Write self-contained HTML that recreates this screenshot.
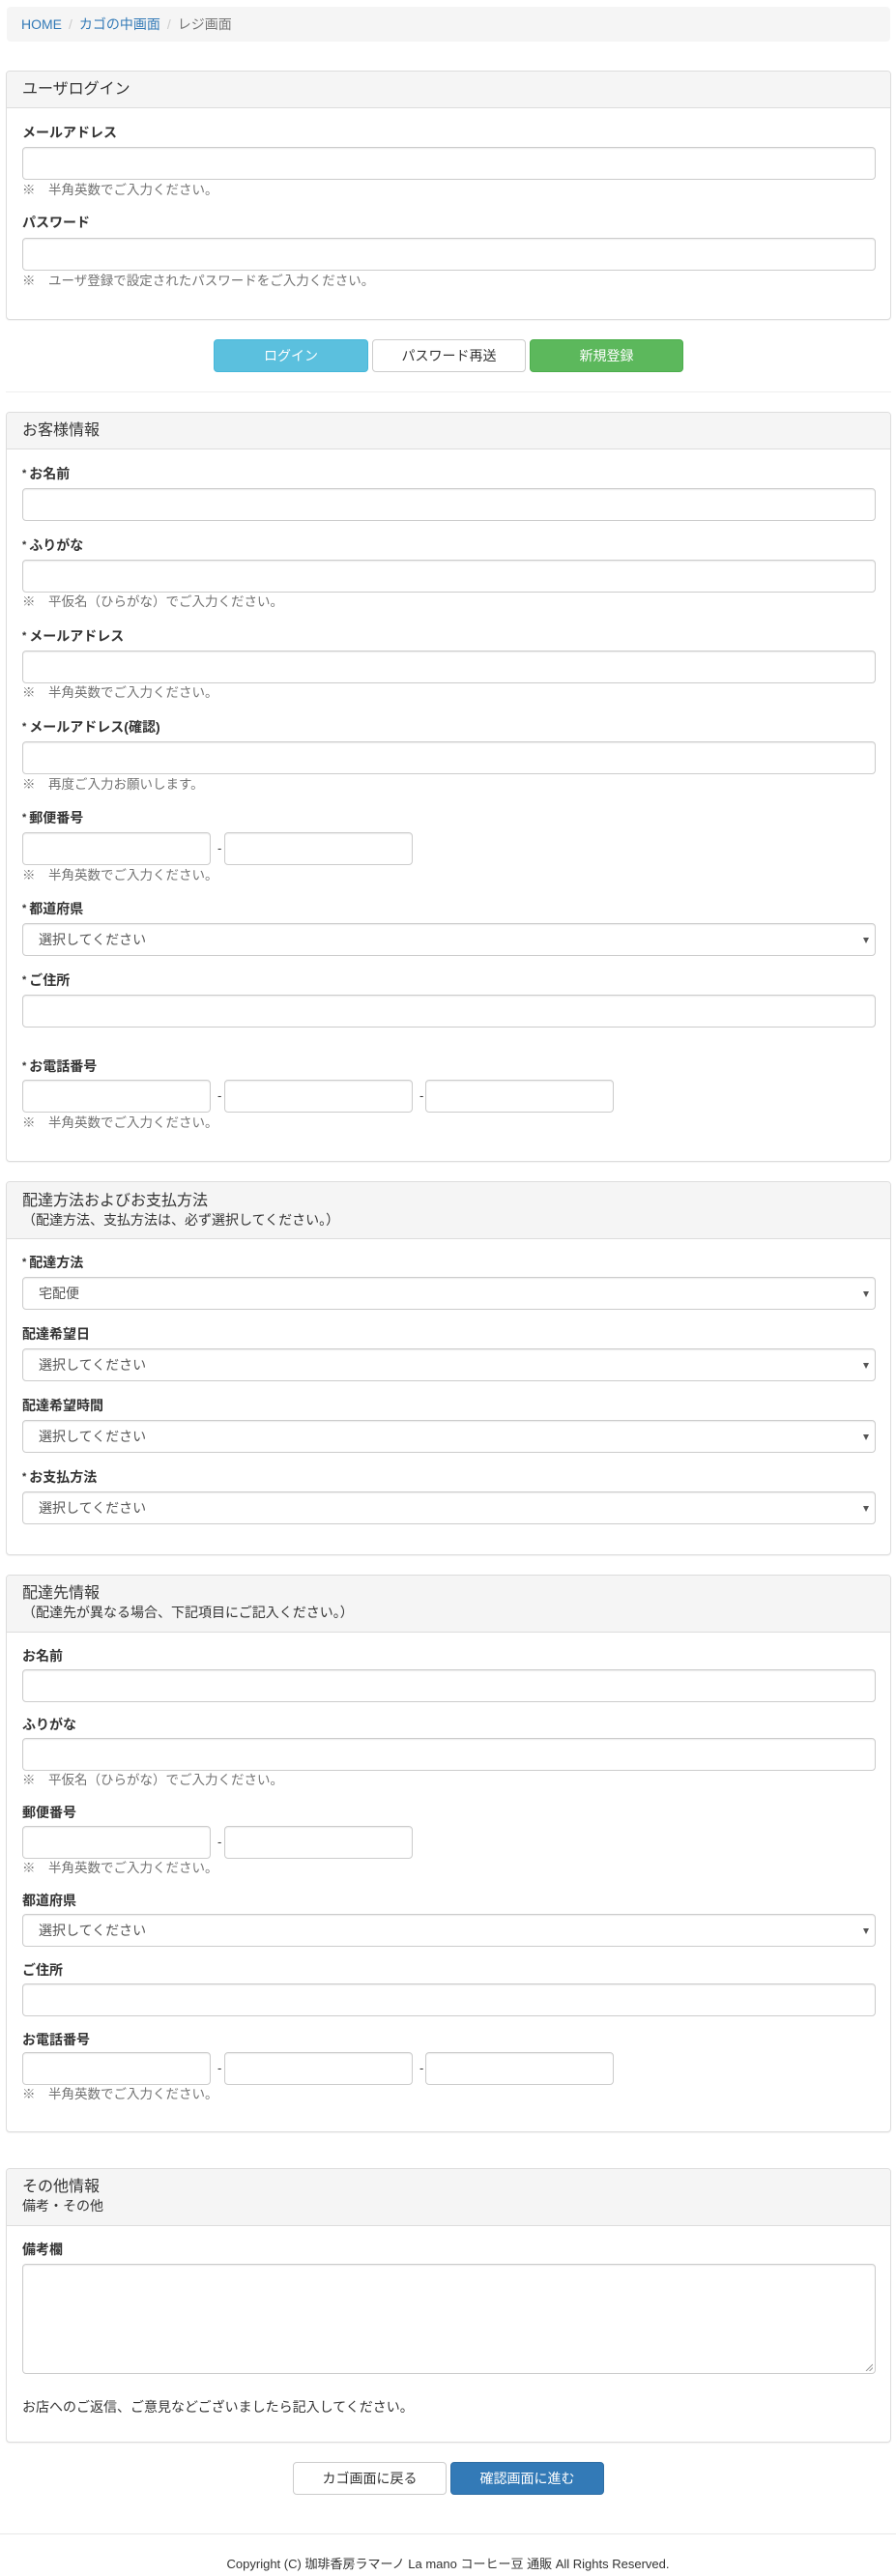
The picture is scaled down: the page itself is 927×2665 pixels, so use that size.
<!DOCTYPE html>
<html><head><meta charset="utf-8">
<style>
*{box-sizing:border-box;margin:0;padding:0}
body{width:927px;height:2665px;position:relative;background:#fff;font-family:"Liberation Sans","Noto Sans CJK JP",sans-serif;color:#333;font-size:14px;overflow:hidden}
.a{position:absolute}
.bc{left:7px;top:7px;width:914px;height:36px;background:#f5f5f5;border-radius:4px;line-height:36px;padding-left:15px;font-size:14px}
.bc a{color:#337ab7;text-decoration:none}
.bc .s{color:#ccc;padding:0 7px}
.bc .c{color:#777}
.pn{left:6px;width:916px;border:1px solid #ddd;border-radius:4px;background:#fff;box-shadow:0 1px 1px rgba(0,0,0,.05)}
.ph{position:absolute;left:0;top:0;right:0;background:#f5f5f5;border-bottom:1px solid #ddd;border-radius:3px 3px 0 0;padding-left:16px}
.pt{font-size:16px;line-height:20px}
.ps{font-size:14px;line-height:19px}
.l{left:23px;font-weight:bold;font-size:14px;line-height:20px;white-space:nowrap}
.l .r{font-size:11px;font-weight:bold;vertical-align:top;margin-right:3px}
.i{left:23px;width:883px;height:34px;border:1px solid #ccc;border-radius:4px;background:#fff;box-shadow:inset 0 1px 1px rgba(0,0,0,.075)}
.sm{width:195px}
.h{left:23px;font-size:13.5px;line-height:20px;color:#737373;white-space:nowrap}
.sel{color:#555;font-size:14px;line-height:32px;padding-left:16px}
.sel:after{content:"";position:absolute;right:6px;top:14px;border-left:3.5px solid transparent;border-right:3.5px solid transparent;border-top:6px solid #555}
.d{font-size:13px;line-height:20px}
.b{height:34px;border-radius:4px;border:1px solid;text-align:center;line-height:32px;font-size:14px}
.hr{left:6px;width:916px;height:1px;background:#eee}
</style></head><body>

<div class="a bc"><a>HOME</a><span class="s">/</span><a>カゴの中画面</a><span class="s">/</span><span class="c">レジ画面</span></div>

<!-- login panel -->
<div class="a pn" style="top:73px;height:258px"><div class="ph" style="height:38px"><div class="pt" style="padding-top:9px">ユーザログイン</div></div></div>
<div class="a l" style="top:127px">メールアドレス</div>
<div class="a i" style="top:152px"></div>
<div class="a h" style="top:187px">※　半角英数でご入力ください。</div>
<div class="a l" style="top:220px">パスワード</div>
<div class="a i" style="top:246px"></div>
<div class="a h" style="top:281px">※　ユーザ登録で設定されたパスワードをご入力ください。</div>

<div class="a b" style="left:221px;top:351px;width:160px;background:#5bc0de;border-color:#46b8da;color:#fff">ログイン</div>
<div class="a b" style="left:385px;top:351px;width:159px;background:#fff;border-color:#ccc;color:#333">パスワード再送</div>
<div class="a b" style="left:548px;top:351px;width:159px;background:#5cb85c;border-color:#4cae4c;color:#fff">新規登録</div>
<div class="a hr" style="top:405px"></div>

<!-- customer panel -->
<div class="a pn" style="top:426px;height:776px"><div class="ph" style="height:38px"><div class="pt" style="padding-top:9px">お客様情報</div></div></div>
<div class="a l" style="top:480px"><span class="r">*</span>お名前</div>
<div class="a i" style="top:505px"></div>
<div class="a l" style="top:554px"><span class="r">*</span>ふりがな</div>
<div class="a i" style="top:579px"></div>
<div class="a h" style="top:613px">※　平仮名（ひらがな）でご入力ください。</div>
<div class="a l" style="top:648px"><span class="r">*</span>メールアドレス</div>
<div class="a i" style="top:673px"></div>
<div class="a h" style="top:707px">※　半角英数でご入力ください。</div>
<div class="a l" style="top:742px"><span class="r">*</span>メールアドレス(確認)</div>
<div class="a i" style="top:767px"></div>
<div class="a h" style="top:802px">※　再度ご入力お願いします。</div>
<div class="a l" style="top:836px"><span class="r">*</span>郵便番号</div>
<div class="a i sm" style="top:861px"></div><div class="a d" style="left:225px;top:868px">-</div>
<div class="a i sm" style="top:861px;left:232px"></div>
<div class="a h" style="top:896px">※　半角英数でご入力ください。</div>
<div class="a l" style="top:930px"><span class="r">*</span>都道府県</div>
<div class="a i sel" style="top:955px">選択してください</div>
<div class="a l" style="top:1004px"><span class="r">*</span>ご住所</div>
<div class="a i" style="top:1029px"></div>
<div class="a l" style="top:1093px"><span class="r">*</span>お電話番号</div>
<div class="a i sm" style="top:1117px"></div><div class="a d" style="left:225px;top:1124px">-</div>
<div class="a i sm" style="top:1117px;left:232px"></div><div class="a d" style="left:434px;top:1124px">-</div>
<div class="a i sm" style="top:1117px;left:440px"></div>
<div class="a h" style="top:1152px">※　半角英数でご入力ください。</div>

<!-- delivery panel -->
<div class="a pn" style="top:1222px;height:387px"><div class="ph" style="height:59px"><div class="pt" style="padding-top:10px">配達方法およびお支払方法</div><div class="ps">（配達方法、支払方法は、必ず選択してください。）</div></div></div>
<div class="a l" style="top:1296px"><span class="r">*</span>配達方法</div>
<div class="a i sel" style="top:1321px">宅配便</div>
<div class="a l" style="top:1370px">配達希望日</div>
<div class="a i sel" style="top:1395px">選択してください</div>
<div class="a l" style="top:1444px">配達希望時間</div>
<div class="a i sel" style="top:1469px">選択してください</div>
<div class="a l" style="top:1518px"><span class="r">*</span>お支払方法</div>
<div class="a i sel" style="top:1543px">選択してください</div>

<!-- shipping panel -->
<div class="a pn" style="top:1629px;height:577px"><div class="ph" style="height:59px"><div class="pt" style="padding-top:9px">配達先情報</div><div class="ps">（配達先が異なる場合、下記項目にご記入ください。）</div></div></div>
<div class="a l" style="top:1703px">お名前</div>
<div class="a i" style="top:1727px"></div>
<div class="a l" style="top:1774px">ふりがな</div>
<div class="a i" style="top:1798px"></div>
<div class="a h" style="top:1832px">※　平仮名（ひらがな）でご入力ください。</div>
<div class="a l" style="top:1865px">郵便番号</div>
<div class="a i sm" style="top:1889px"></div><div class="a d" style="left:225px;top:1896px">-</div>
<div class="a i sm" style="top:1889px;left:232px"></div>
<div class="a h" style="top:1923px">※　半角英数でご入力ください。</div>
<div class="a l" style="top:1956px">都道府県</div>
<div class="a i sel" style="top:1980px">選択してください</div>
<div class="a l" style="top:2028px">ご住所</div>
<div class="a i" style="top:2052px"></div>
<div class="a l" style="top:2100px">お電話番号</div>
<div class="a i sm" style="top:2123px"></div><div class="a d" style="left:225px;top:2130px">-</div>
<div class="a i sm" style="top:2123px;left:232px"></div><div class="a d" style="left:434px;top:2130px">-</div>
<div class="a i sm" style="top:2123px;left:440px"></div>
<div class="a h" style="top:2157px">※　半角英数でご入力ください。</div>

<!-- other panel -->
<div class="a pn" style="top:2243px;height:284px"><div class="ph" style="height:59px"><div class="pt" style="padding-top:9px">その他情報</div><div class="ps">備考・その他</div></div></div>
<div class="a l" style="top:2317px">備考欄</div>
<div class="a i" style="top:2342px;height:114px"><svg class="a" style="right:2px;bottom:2px" width="8" height="8"><path d="M1 8L8 1M4.5 8L8 4.5" stroke="#999" stroke-width="1"/></svg></div>
<div class="a" style="left:23px;top:2480px;line-height:20px">お店へのご返信、ご意見などございましたら記入してください。</div>

<div class="a b" style="left:303px;top:2547px;width:159px;background:#fff;border-color:#ccc;color:#333">カゴ画面に戻る</div>
<div class="a b" style="left:466px;top:2547px;width:159px;background:#337ab7;border-color:#2e6da4;color:#fff">確認画面に進む</div>

<div class="a" style="left:0;top:2621px;width:927px;height:1px;background:#e7e7e7"></div>
<div class="a" style="left:0;top:2643px;width:927px;text-align:center;line-height:20px;font-size:13px">Copyright (C) 珈琲香房ラマーノ La mano コーヒー豆 通販 All Rights Reserved.</div>
</body></html>
